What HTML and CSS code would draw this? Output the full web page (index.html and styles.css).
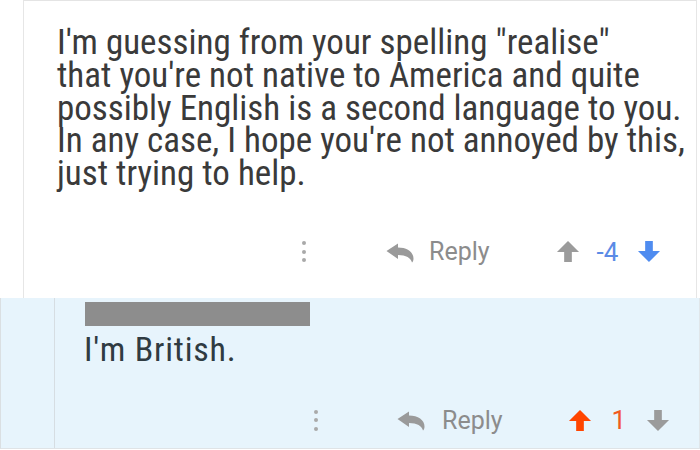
FILE: index.html
```html
<!DOCTYPE html>
<html>
<head>
<meta charset="utf-8">
<link rel="stylesheet" href="styles.css">
</head>
<body>
<div class="page">
  <div class="comment">
    <p class="text">I'm guessing from your spelling "realise"<br>that you're not native to America and quite<br>possibly English is a second language to you.<br>In any case, I hope you're not annoyed by this,<br>just trying to help.</p>
    <div class="actions actions-top">
      <span class="dots"><i></i><i></i><i></i></span>
      <svg class="reply-icon" viewBox="0 0 28 20"><path d="M0.5,8 L12,0.5 L12,4.5 C21,4.5 27.5,9 27.5,15.5 C27.5,17.5 26.8,19 26,19.5 C25,15 20,12 12,12 L12,16 Z"/></svg>
      <span class="reply">Reply</span>
      <svg class="arrow up grey" viewBox="0 0 24 24"><polygon points="12,1 23.5,12.5 16,12.5 16,23 8,23 8,12.5 0.5,12.5"/></svg>
      <span class="score blue">-4</span>
      <svg class="arrow down blue" viewBox="0 0 24 24"><polygon points="12,23 23.5,11.5 16,11.5 16,1 8,1 8,11.5 0.5,11.5"/></svg>
    </div>
  </div>
  <div class="replybox">
    <div class="thread">
      <div class="redacted"></div>
      <p class="text2">I'm British.</p>
      <div class="actions actions-bottom">
        <span class="dots"><i></i><i></i><i></i></span>
        <svg class="reply-icon" viewBox="0 0 28 20"><path d="M0.5,8 L12,0.5 L12,4.5 C21,4.5 27.5,9 27.5,15.5 C27.5,17.5 26.8,19 26,19.5 C25,15 20,12 12,12 L12,16 Z"/></svg>
        <span class="reply">Reply</span>
        <svg class="arrow up orange" viewBox="0 0 24 24"><polygon points="12,1 23.5,12.5 16,12.5 16,23 8,23 8,12.5 0.5,12.5"/></svg>
        <span class="score orange">1</span>
        <svg class="arrow down grey" viewBox="0 0 24 24"><polygon points="12,23 23.5,11.5 16,11.5 16,1 8,1 8,11.5 0.5,11.5"/></svg>
      </div>
    </div>
  </div>
</div>
</body>
</html>
```
FILE: styles.css
```css
html, body { margin: 0; padding: 0; background: #ffffff; }
.page { width: 700px; height: 450px; overflow: hidden; }

.comment {
  margin-left: 23px;
  width: 674px;
  height: 298px;
  border-top: 1px solid #e4e4e4;
  border-left: 1px solid #e6e6e6;
  border-right: 1px solid #e6e6e6;
  padding-left: 33px;
  box-sizing: border-box;
  padding-top: 26px;
  display: flex;
  flex-direction: column;
}
.text {
  margin: 0;
  font-family: "Roboto Condensed", "Roboto", sans-serif;
  font-size: 35px;
  line-height: 32.75px;
  color: #3a3a3a;
  white-space: nowrap;
}

.actions {
  display: flex;
  align-items: center;
  height: 40px;
  font-family: "Roboto", "Liberation Sans", sans-serif;
}
.actions-top { margin-top: 41px; margin-left: 245px; }
.actions-bottom { margin-top: 33px; margin-left: 230px; }

.dots { display: flex; flex-direction: column; gap: 4.5px; width: 4px; }
.dots i { display: block; width: 4px; height: 4px; border-radius: 50%; background: #a9a9a9; }

.reply-icon { width: 28px; height: 20px; fill: #9a9a9a; margin-left: 80px; margin-top: 2px; }
.reply { font-size: 25px; color: #8c8c8c; margin-left: 15px; }
.arrow { width: 24px; height: 23px; }
.up { margin-left: 66px; }
.score { font-size: 26px; margin-left: 17px; }
.down { margin-left: 19px; }

.grey { fill: #9b9b9b; color: #9b9b9b; }
.blue { fill: #4f8cf0; color: #5b8be6; }
.orange { fill: #ff4500; color: #f15a1f; }

.replybox {
  height: 151px;
  background: #e7f4fc;
  border-left: 1px solid #dadfe2;
  border-right: 1px solid #e0e6ea;
  border-bottom: 1px solid #dfe3e6;
  box-sizing: border-box;
}
.thread {
  margin-left: 53px;
  height: 100%;
  border-left: 1px solid #d6dde2;
  padding-left: 29px;
  padding-top: 4px;
  box-sizing: border-box;
}
.redacted { width: 225px; height: 24px; background: #8d8d8d; margin-left: 1px; }
.text2 {
  margin: 5px 0 0 0;
  font-family: "Roboto Condensed", "Roboto", sans-serif;
  font-size: 34px;
  line-height: 36px;
  letter-spacing: 0.8px;
  color: #2f3b42;
}
.actions-bottom .reply-icon { margin-left: 79px; }
.actions-bottom .reply { margin-left: 17px; }
.actions-bottom .up { margin-left: 65px; }
.actions-bottom .score { margin-left: 20px; }
.actions-bottom .down { margin-left: 20px; }
```
